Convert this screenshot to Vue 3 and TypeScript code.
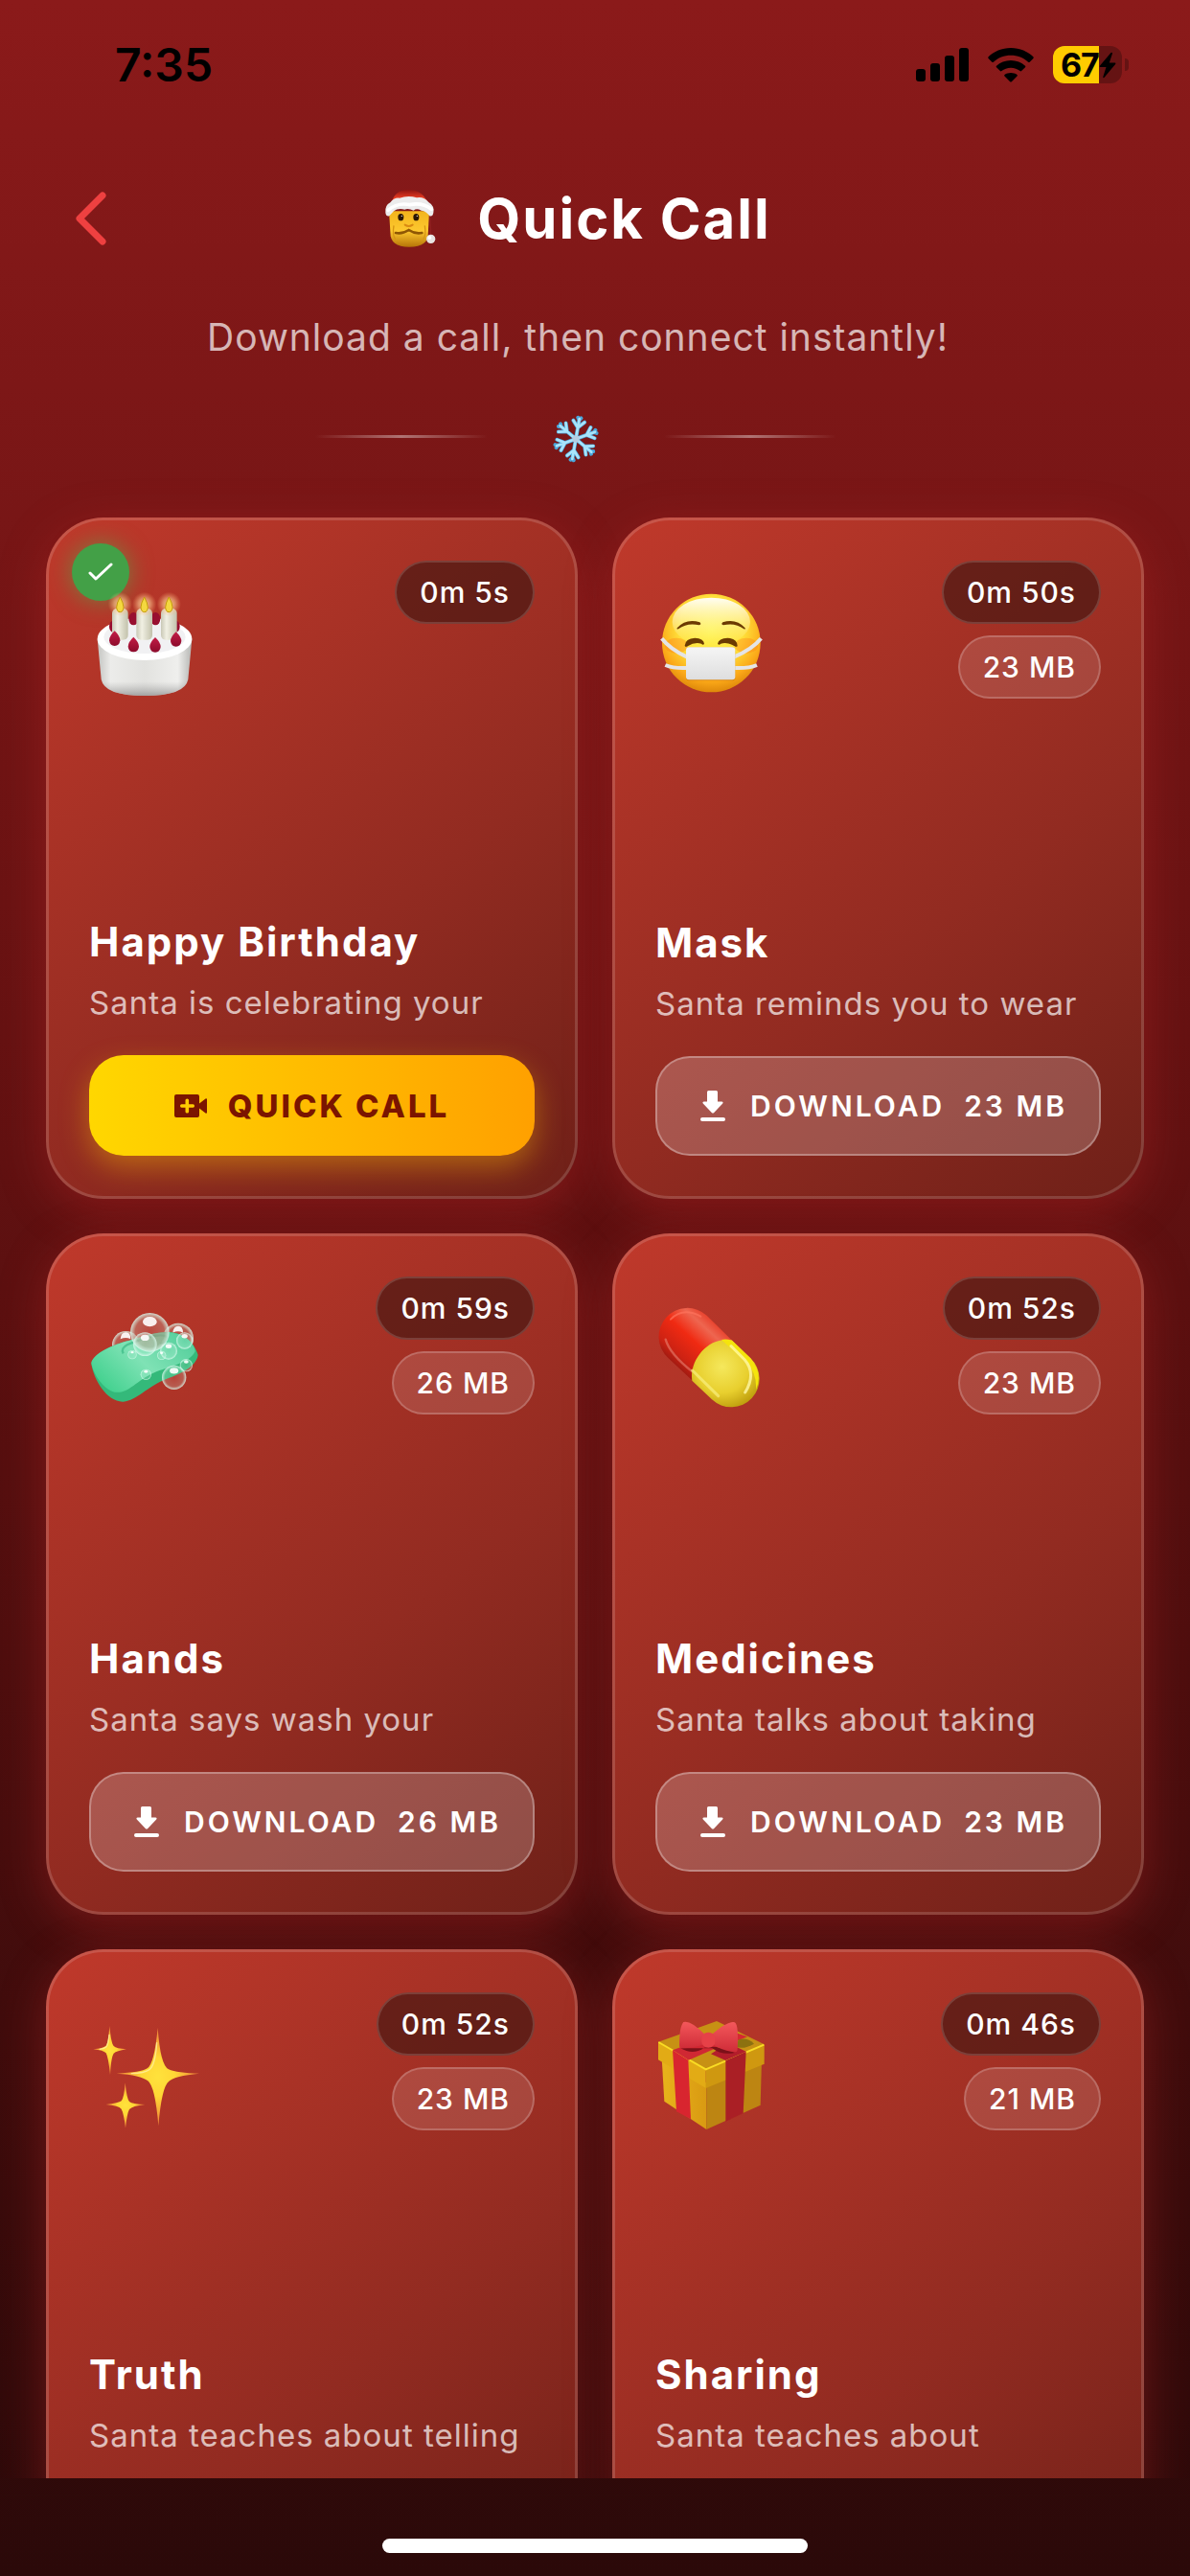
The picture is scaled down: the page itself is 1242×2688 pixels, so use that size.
<script setup lang="ts">
type Art = 'cake' | 'mask' | 'soap' | 'pill' | 'sparkles' | 'gift'

interface Call {
  art: Art
  title: string
  text: string
  duration: string
  size?: string
  ready?: boolean
}

const calls: Call[] = [
  { art: 'cake', title: 'Happy Birthday', text: 'Santa is celebrating your', duration: '0m 5s', ready: true },
  { art: 'mask', title: 'Mask', text: 'Santa reminds you to wear', duration: '0m 50s', size: '23 MB' },
  { art: 'soap', title: 'Hands', text: 'Santa says wash your', duration: '0m 59s', size: '26 MB' },
  { art: 'pill', title: 'Medicines', text: 'Santa talks about taking', duration: '0m 52s', size: '23 MB' },
  { art: 'sparkles', title: 'Truth', text: 'Santa teaches about telling', duration: '0m 52s', size: '23 MB' },
  { art: 'gift', title: 'Sharing', text: 'Santa teaches about', duration: '0m 46s', size: '21 MB' },
]

const flakeArms = [0, 60, 120, 180, 240, 300]
</script>

<template>
  <div class="screen">
    <div class="status">
      <span class="time">7:35</span>
      <div class="indicators">
        <svg class="signal" viewBox="0 0 55 35" aria-hidden="true">
          <rect x="0" y="22" width="10" height="13" rx="3" />
          <rect x="15" y="16" width="10" height="19" rx="3" />
          <rect x="30" y="8" width="10" height="27" rx="3" />
          <rect x="45" y="0" width="10" height="35" rx="3" />
        </svg>
        <svg class="wifi" viewBox="0 0 48 36" aria-hidden="true">
          <path d="M24 0C14.600 0 6.200 3.700 0.600 9.300Q-0.100 10.100 0.600 10.900L4.300 14.700Q5.100 15.400 5.900 14.700C10.600 10.300 17 7.700 24 7.700S37.400 10.300 42.100 14.700Q42.900 15.400 43.700 14.700L47.400 10.900Q48.100 10.100 47.400 9.300C41.800 3.700 33.400 0 24 0Z" />
          <path d="M24 13C18.200 13 12.900 15.200 9 18.700Q8.200 19.500 9 20.300L12.900 24.100Q13.600 24.800 14.400 24.100C17 22 20.300 20.700 24 20.700S31 22 33.600 24.100Q34.400 24.800 35.100 24.100L39 20.300Q39.800 19.500 39 18.700C35.100 15.200 29.800 13 24 13Z" />
          <path d="M24 26C21.500 26 19.300 26.700 17.500 27.900Q16.600 28.600 17.500 29.500L23.200 35.200Q24 36 24.800 35.200L30.500 29.500Q31.400 28.600 30.500 27.900C28.700 26.700 26.500 26 24 26Z" />
        </svg>
        <div class="battery">
          <span class="level">67</span>
          <svg class="bolt" viewBox="0 0 18 28" aria-hidden="true">
            <path d="M12.500 1L0.800 14.800Q0.300 16 1.500 16H7.500L4.200 26.500Q4.500 27.800 5.600 26.800L17.300 12.800Q17.800 11.400 16.500 11.400H10.800L14 1.800Q13.700 0.300 12.500 1Z" />
          </svg>
        </div>
        <span class="battery-cap"></span>
      </div>
    </div>

    <header class="header">
      <button class="back" type="button" aria-label="Back">
        <svg viewBox="0 0 32 56" aria-hidden="true"><path d="M28 4L4 28L28 52" /></svg>
      </button>
      <h1>
        <svg class="santa" viewBox="130 90 165 186" aria-hidden="true">
          <defs>
            <linearGradient id="santa-skin" x1="0" y1="0" x2="0" y2="1">
              <stop offset="0" stop-color="#f2b41c" /><stop offset=".55" stop-color="#fdc82f" /><stop offset="1" stop-color="#b67408" />
            </linearGradient>
            <linearGradient id="santa-hat" x1="0" y1="0" x2="0" y2="1">
              <stop offset="0" stop-color="#8e1410" /><stop offset=".5" stop-color="#e23a22" /><stop offset="1" stop-color="#f4573a" />
            </linearGradient>
          </defs>
          <path d="M258 120Q278 160 275 236" fill="none" stroke="#8f2020" stroke-width="4" />
          <path d="M145 160H271L267 238Q263 272 208 272Q155 272 150 238Z" fill="url(#santa-skin)" />
          <path d="M152 142C156 108 175 93 205 93C238 93 260 108 267 142Z" fill="url(#santa-hat)" />
          <path d="M134 165Q131 142 149 133Q160 117 178 119Q205 109 232 118Q254 114 269 132Q288 143 284 165Q282 178 272 175Q262 160 246 158Q231 150 222 158Q205 150 194 155Q173 150 160 160L146 175Q136 178 134 165Z" fill="#ececec" />
          <path d="M142 157Q172 132 210 140Q250 132 278 154" fill="none" stroke="#fff" stroke-width="11" stroke-linecap="round" />
          <ellipse cx="182" cy="179" rx="9" ry="11" fill="#2b1703" /><ellipse cx="230" cy="179" rx="9" ry="11" fill="#2b1703" />
          <circle cx="185" cy="175" r="2" fill="#fff" /><circle cx="233" cy="175" r="2" fill="#fff" />
          <path d="M195 203Q207 211 219 203" fill="none" stroke="#d98912" stroke-width="6" stroke-linecap="round" />
          <path d="M166 228Q185 233 207 219Q228 233 248 228" fill="none" stroke="#8f5704" stroke-width="8" stroke-linecap="round" />
          <path d="M160 205Q155 235 165 248M257 205Q262 235 252 248" fill="none" stroke="#d79512" stroke-width="4" />
          <circle cx="276" cy="247" r="14" fill="#e8e4e2" /><circle cx="272" cy="243" r="6" fill="#fff" />
        </svg>
        <span>Quick Call</span>
      </h1>
    </header>
    <p class="lead">Download a call, then connect instantly!</p>
    <div class="divider">
      <span class="rule"></span>
      <svg class="flake" viewBox="-72 -72 144 144" aria-hidden="true">
        <g v-for="a in flakeArms" :key="a" :transform="`rotate(${a + 10})`" fill="none" stroke-linecap="round">
          <path d="M0 0V-64M0 -36L-18 -56M0 -36L18 -56M0 -60L-5 -67M0 -60L5 -67" stroke="#4aa6da" stroke-width="12" />
          <path d="M0 0V-64M0 -36L-18 -56M0 -36L18 -56" stroke="#a9e4fa" stroke-width="8" />
        </g>
        <circle r="11" fill="#b5cde2" />
      </svg>
      <span class="rule"></span>
    </div>

    <main class="list">
      <article v-for="call in calls" :key="call.title" class="card">
        <span v-if="call.ready" class="done" role="img" aria-label="Downloaded">
          <svg viewBox="0 0 26 20" aria-hidden="true"><path d="M2 11L8 17L24 2" /></svg>
        </span>
        <div class="top">
          <svg v-if="call.art === 'cake'" class="art" viewBox="0 0 360 360" aria-hidden="true">
            <defs>
              <linearGradient id="cake-side" x1="0" x2="1">
                <stop offset="0" stop-color="#c3c3c0" /><stop offset=".14" stop-color="#ececea" /><stop offset=".5" stop-color="#e2e2df" /><stop offset=".85" stop-color="#efefed" /><stop offset="1" stop-color="#b5b5b2" />
              </linearGradient>
              <linearGradient id="cake-shade" x1="0" y1="0" x2="0" y2="1">
                <stop offset=".75" stop-color="#999" stop-opacity="0" /><stop offset="1" stop-color="#777" stop-opacity=".6" />
              </linearGradient>
              <linearGradient id="candle" x1="0" x2="1">
                <stop offset="0" stop-color="#c9c8b6" /><stop offset=".35" stop-color="#f1f0e3" /><stop offset="1" stop-color="#c2c1ab" />
              </linearGradient>
              <radialGradient id="glow"><stop offset="0" stop-color="#ffe28a" stop-opacity=".9" /><stop offset=".5" stop-color="#ffcf95" stop-opacity=".55" /><stop offset="1" stop-color="#ffab70" stop-opacity="0" /></radialGradient>
              <linearGradient id="berry" x1="0" y1="0" x2="0" y2="1"><stop offset="0" stop-color="#c31d46" /><stop offset="1" stop-color="#8c0a2b" /></linearGradient>
            </defs>
            <path d="M26 173L38 300Q48 351 174 351T310 300L322 173Z" fill="url(#cake-side)" />
            <path d="M26 173L38 300Q48 351 174 351T310 300L322 173Z" fill="url(#cake-shade)" />
            <ellipse cx="174" cy="173" rx="148" ry="67" fill="#fff" />
            <ellipse cx="174" cy="167" rx="128" ry="52" fill="#f1f1f3" />
            <g fill="#980f30"><ellipse cx="75" cy="134" rx="12" ry="18" /><ellipse cx="139" cy="110" rx="15" ry="20" /><ellipse cx="208" cy="110" rx="15" ry="20" /><ellipse cx="272" cy="134" rx="12" ry="18" /></g>
            <g v-for="x in [97, 173, 250]" :key="x">
              <rect :x="x - 25" y="78" width="50" height="98" rx="15" fill="url(#candle)" />
              <circle :cx="x" cy="64" r="38" fill="url(#glow)" />
              <path :d="`M${x} 42Q${x + 11} 62 ${x + 11} 74Q${x + 10} 89 ${x} 89T${x - 11} 74Q${x - 11} 62 ${x} 42Z`" fill="#f4d83f" stroke="#c49a0b" stroke-width="3" />
            </g>
            <g fill="url(#berry)">
              <path d="M80 148Q97 164 97 178Q95 195 80 195T63 178Q63 164 80 148Z" />
              <path d="M139 167Q156 183 156 197Q154 214 139 214T122 197Q122 183 139 167Z" />
              <path d="M207 168Q224 184 224 198Q222 215 207 215T190 198Q190 184 207 168Z" />
              <path d="M272 151Q289 167 289 180Q287 197 272 197T255 180Q255 167 272 151Z" />
            </g>
          </svg>

          <svg v-else-if="call.art === 'mask'" class="art" viewBox="0 0 360 360" aria-hidden="true">
            <defs>
              <radialGradient id="face" cx=".5" cy=".36" r=".66"><stop offset="0" stop-color="#fff44c" /><stop offset=".5" stop-color="#ffe03a" /><stop offset=".8" stop-color="#fba818" /><stop offset="1" stop-color="#d98308" /></radialGradient>
              <linearGradient id="shine" x1="0" y1="0" x2="0" y2="1"><stop offset="0" stop-color="#fff" stop-opacity=".95" /><stop offset="1" stop-color="#fff59a" stop-opacity="0" /></linearGradient>
              <linearGradient id="cloth" x1="0" y1="0" x2="0" y2="1"><stop offset="0" stop-color="#f5f5f5" /><stop offset="1" stop-color="#dedede" /></linearGradient>
            </defs>
            <circle cx="175" cy="186" r="154" fill="url(#face)" />
            <ellipse cx="175" cy="120" rx="122" ry="76" fill="url(#shine)" />
            <g fill="#ff7a16" opacity=".35"><ellipse cx="66" cy="194" rx="36" ry="24" /><ellipse cx="285" cy="194" rx="36" ry="24" /></g>
            <g fill="#6b3a02">
              <path d="M68 139Q96 108 139 121Q146 128 137 130Q101 121 72 142Q66 144 68 139Z" />
              <path d="M281 139Q253 108 211 121Q204 128 213 130Q249 121 277 142Q283 144 281 139Z" />
              <path d="M92 194Q94 171 124 170Q151 171 153 188Q150 194 144 188Q124 181 101 196Q94 200 92 194Z" />
              <path d="M257 194Q255 171 226 170Q198 171 195 188Q199 194 205 188Q225 181 248 196Q256 200 257 194Z" />
            </g>
            <g fill="none" stroke="#e4e4e6" stroke-width="12"><path d="M20 172Q48 207 98 229M331 172Q302 207 247 229M31 255Q58 266 98 264M318 255Q292 266 247 264" /></g>
            <rect x="96" y="199" width="154" height="105" rx="9" fill="#c56c08" opacity=".5" />
            <rect x="96" y="199" width="154" height="102" rx="9" fill="url(#cloth)" />
          </svg>

          <svg v-else-if="call.art === 'soap'" class="art" viewBox="39 78 360 360" aria-hidden="true">
            <defs>
              <linearGradient id="soap-top" x1="0" y1=".8" x2="1" y2=".2"><stop offset="0" stop-color="#3ed08c" /><stop offset=".5" stop-color="#7fe2b5" /><stop offset="1" stop-color="#55cf9c" /></linearGradient>
              <radialGradient id="bubble"><stop offset="0" stop-color="#fff" stop-opacity=".08" /><stop offset=".75" stop-color="#d8fff0" stop-opacity=".2" /><stop offset="1" stop-color="#d9f7ec" stop-opacity=".85" /></radialGradient>
            </defs>
            <g v-for="b in [[154, 220, 43], [318, 200, 48]]" :key="b[0]"><circle :cx="b[0]" :cy="b[1]" :r="b[2]" fill="url(#bubble)" /><path :d="`M${b[0] - 17} ${b[1] - 18}Q${b[0] - 15} ${b[1] - 39} ${b[0]} ${b[1] - 39}T${b[0] + 15} ${b[1] - 18}Q${b[0]} ${b[1] - 26} ${b[0] - 17} ${b[1] - 18}Z`" fill="#fff" opacity=".9" /></g>
            <path d="M46 280C49 250 108 221 160 208C220 190 274 170 318 185C355 198 374 229 380 252C374 287 331 308 286 325C216 352 190 395 146 398C96 400 53 329 46 280Z" fill="#34b97a" />
            <path d="M46 276C52 247 112 219 166 206C220 188 276 171 320 187C354 199 370 224 371 240C354 277 292 286 240 308C184 334 161 374 119 368C83 359 51 310 46 276Z" fill="url(#soap-top)" />
            <path d="M146 247C130 220 190 208 222 197Q268 184 282 195Q290 206 262 217" fill="none" stroke="#4cc592" stroke-width="7" />
            <circle cx="229" cy="181" r="58" fill="#b5463a" opacity=".35" />
            <g v-for="b in [[229, 181, 61], [214, 218, 37], [288, 239, 27], [338, 207, 26], [305, 322, 38], [343, 284, 20], [217, 313, 17], [174, 251, 14], [266, 253, 14]]" :key="`${b[0]}-${b[1]}`">
              <circle :cx="b[0]" :cy="b[1]" :r="b[2]" fill="url(#bubble)" />
              <ellipse :cx="b[0]" :cy="b[1] - b[2] * 0.55" :rx="b[2] * 0.36" :ry="b[2] * 0.25" fill="#fff" opacity=".9" />
            </g>
          </svg>

          <svg v-else-if="call.art === 'pill'" class="art" viewBox="42 78 360 360" aria-hidden="true">
            <defs>
              <linearGradient id="pill-red" x1=".8" y1=".1" x2=".15" y2=".8"><stop offset="0" stop-color="#e52a16" /><stop offset=".25" stop-color="#ee6650" /><stop offset=".5" stop-color="#f02a12" /><stop offset=".8" stop-color="#cc2213" /><stop offset="1" stop-color="#8f1710" /></linearGradient>
              <radialGradient id="pill-yellow" cx=".45" cy=".4" r=".65"><stop offset="0" stop-color="#f5e85c" /><stop offset=".6" stop-color="#e8cf2e" /><stop offset="1" stop-color="#bd9c0c" /></radialGradient>
            </defs>
            <path d="M157 331L82 261A86 86 0 0 1 203 128L282 206Q185 220 157 331Z" fill="url(#pill-red)" />
            <path d="M74 203Q87 249 159 305" fill="none" stroke="#e88070" stroke-width="7" stroke-linecap="round" opacity=".6" />
            <path d="M90 140Q128 101 184 131" fill="none" stroke="#ff745c" stroke-width="6" stroke-linecap="round" opacity=".7" />
            <path d="M282 206L340 262A88 88 0 0 1 219 391L157 332C147 267 211 190 282 206Z" fill="url(#pill-yellow)" />
            <path d="M249 204Q263 200 282 206L340 262Q380 310 357 361Q360 307 328 276Z" fill="#f5e40c" />
            <path d="M279 224L322 267Q359 310 323 369" fill="none" stroke="#fff8a5" stroke-width="9" stroke-linecap="round" opacity=".8" />
            <path d="M158 300L239 380" stroke="#fbf285" stroke-width="9" stroke-linecap="round" opacity=".65" />
          </svg>

          <svg v-else-if="call.art === 'sparkles'" class="art" viewBox="39 69 360 360" aria-hidden="true">
            <defs>
              <radialGradient id="spark"><stop offset="0" stop-color="#ffe23c" /><stop offset=".4" stop-color="#ffd735" /><stop offset="1" stop-color="#f0803a" /></radialGradient>
            </defs>
            <g fill="url(#spark)">
              <path d="M254 108Q262 226 288 238Q315 250 384 251Q306 258 289 275Q266 292 256 415Q246 292 223 274Q201 256 125 251Q202 248 221 235Q243 222 254 108Z" />
              <path d="M103 102Q108 157 116 165Q124 173 156 175Q125 180 116 188Q108 199 105 255Q99 199 92 187Q84 178 52 175Q83 172 91 165Q99 158 103 102Z" />
              <path d="M152 280Q157 331 165 339Q174 347 214 348Q174 353 165 363Q158 375 153 422Q147 374 140 362Q132 352 91 348Q132 344 140 337Q148 330 152 280Z" />
            </g>
            <path d="M251 155Q246 224 229 238Q212 250 172 251M102 130Q99 160 93 167Q87 173 73 175" fill="none" stroke="#fff0a0" stroke-width="4" stroke-linecap="round" opacity=".8" />
          </svg>

          <svg v-else class="art" viewBox="42 69 360 360" aria-hidden="true">
            <defs>
              <linearGradient id="bow" x1="0" y1="0" x2="0" y2="1"><stop offset="0" stop-color="#f4585b" /><stop offset="1" stop-color="#cf2c38" /></linearGradient>
              <linearGradient id="gold" x1="0" x2="1"><stop offset="0" stop-color="#e8b31b" /><stop offset="1" stop-color="#d99a12" /></linearGradient>
            </defs>
            <path d="M62 200L70 338L202 426L202 280Z" fill="url(#gold)" />
            <path d="M202 280V426L371 350L375 205Z" fill="#bd8512" />
            <path d="M51 152L234 87L383 160L200 240Z" fill="#c79114" />
            <path d="M51 152L200 240V297L51 208Z" fill="#e2ab15" />
            <path d="M200 240L383 160V221L200 297Z" fill="#cf9810" />
            <path d="M52 153L200 238L382 161" fill="none" stroke="#f9dc24" stroke-width="6" />
            <path d="M96 178L198 140L245 166L146 209Z" fill="#d02833" />
            <path d="M216 190L262 210L326 182L270 155Z" fill="#b31d2b" />
            <path d="M286 121L330 136L297 149Z" fill="#d52832" />
            <path d="M96 178L145 209L153 394L108 370Z" fill="#d8252f" />
            <path d="M262 211L326 182L317 376L262 401Z" fill="#aa1f25" />
            <path d="M296 168Q320 176 351 158Q330 137 302 145Z" fill="#8c7110" />
            <path d="M121 172Q160 195 195 170Q235 160 290 186Q250 195 220 172Z" fill="#7c1119" />
            <path d="M130 90Q151 83 194 126V160Q160 172 126 172Q117 173 117 162Q117 105 130 90Z" fill="url(#bow)" />
            <path d="M284 90Q262 92 222 126V160Q250 180 292 184Q299 184 299 174Q303 105 293 93Q290 89 284 90Z" fill="url(#bow)" />
            <rect x="187" y="122" width="42" height="48" rx="20" fill="#e64148" />
          </svg>

          <div class="pills">
            <span class="pill dark">{{ call.duration }}</span>
            <span v-if="call.size" class="pill">{{ call.size }}</span>
          </div>
        </div>

        <h2>{{ call.title }}</h2>
        <p class="text">{{ call.text }}</p>
        <button v-if="call.ready" class="action call" type="button">
          <svg class="video" viewBox="0 0 34 24" aria-hidden="true">
            <path fill-rule="evenodd" d="M2 0H24Q26 0 26 2V9.500L32.500 4.500Q34 3.800 34 5.500V18.500Q34 20.200 32.500 19.500L26 14.500V22Q26 24 24 24H2Q0 24 0 22V2Q0 0 2 0ZM11.500 6V10.300H7.500Q6 10.300 6 12T7.500 13.700H11.500V18Q11.500 19.500 13.300 19.500T15.100 18V13.700H19.500Q21 13.700 21 12T19.500 10.300H15.100V6Q15.100 4.500 13.300 4.500T11.500 6Z" />
          </svg>
          <span>QUICK CALL</span>
        </button>
        <button v-else class="action" type="button">
          <svg class="arrow" viewBox="0 0 26 32" aria-hidden="true">
            <path d="M8.500 0H16.500Q18 0 18 1.500V11.500H22.200Q24.500 11.900 23 13.800L14.200 23Q13 24 11.800 23L3 13.800Q1.500 11.900 3.800 11.500H7V1.500Q7 0 8.500 0Z" />
            <rect x="0" y="28" width="26" height="4" rx="2" />
          </svg>
          <span>DOWNLOAD</span>
          <span class="amount">{{ call.size }}</span>
        </button>
      </article>
    </main>

    <footer class="home"><span class="bar"></span></footer>
  </div>
</template>

<style>
body {
  margin: 0;
}
</style>

<style scoped>
.screen {
  display: flex;
  flex-direction: column;
  height: 100vh;
  box-sizing: border-box;
  overflow: hidden;
  color: #fff;
  font-family: Inter, "Liberation Sans", sans-serif;
  background: linear-gradient(#8b1a1a 0%, #5c1010 50%, #2b0909 100%);
}

.status {
  display: flex;
  align-items: center;
  justify-content: space-between;
  height: 135px;
  padding: 0 64px 0 120px;
  color: #000;
}

.time {
  font-size: 48px;
  font-weight: 600;
  line-height: 60px;
}

.indicators {
  display: flex;
  align-items: center;
}

.signal {
  width: 55px;
  height: 35px;
  margin-right: 20px;
}

.wifi {
  width: 48px;
  height: 36px;
  margin-right: 20px;
}

.battery {
  display: flex;
  align-items: center;
  box-sizing: border-box;
  width: 72px;
  height: 39px;
  padding-left: 8px;
  border-radius: 12px;
  background: linear-gradient(90deg, #fc0 0 67%, #651313 67%);
}

.level {
  width: 40px;
  font-size: 34px;
  font-weight: 700;
  line-height: 39px;
  letter-spacing: -1px;
}

.bolt {
  width: 18px;
  height: 28px;
}

.battery-cap {
  width: 4px;
  height: 13px;
  margin-left: 3px;
  border-radius: 0 6px 6px 0;
  background: #651313;
}

.header {
  display: grid;
  grid-template-columns: 126px 1fr 126px;
  align-items: center;
  margin: 54px 36px 0 0;
}

.back {
  display: flex;
  margin-left: 79px;
  padding: 0;
  border: 0;
  background: none;
}

.back svg {
  width: 32px;
  height: 56px;
  fill: none;
  stroke: #ee4040;
  stroke-width: 7;
  stroke-linecap: round;
  stroke-linejoin: round;
}

h1 {
  display: flex;
  align-items: center;
  justify-content: center;
  gap: 42px;
  margin: 0;
  font-size: 58px;
  font-weight: 700;
  line-height: 78px;
  letter-spacing: 2px;
}

.santa {
  width: 55px;
  height: 62px;
}

.lead {
  margin: 61px 36px 0 0;
  color: rgba(255, 255, 255, 0.7);
  font-size: 39px;
  line-height: 48px;
  letter-spacing: 1px;
  text-align: center;
}

.divider {
  display: flex;
  align-items: center;
  justify-content: center;
  gap: 68px;
  margin: 56px 40px 0 0;
}

.rule {
  width: 180px;
  height: 3px;
  margin-bottom: 6px;
  background: linear-gradient(90deg, transparent, rgba(255, 255, 255, 0.4), transparent);
}

.flake {
  width: 48px;
  height: 52px;
}

.list {
  display: grid;
  flex: 1;
  grid-template-columns: 1fr 1fr;
  align-content: start;
  gap: 36px;
  min-height: 0;
  padding: 56px 48px 0;
  overflow-y: auto;
  scrollbar-width: none;
}

.card {
  position: relative;
  display: flex;
  flex-direction: column;
  box-sizing: border-box;
  min-height: 711px;
  padding: 42px;
  border: 3px solid rgba(255, 255, 255, 0.15);
  border-radius: 60px;
  background: linear-gradient(142deg, #c0392b 0%, #922b21 60%, #6e2018 100%) border-box;
  box-shadow: 0 12px 48px rgba(192, 40, 40, 0.4);
}

.done {
  position: absolute;
  top: 24px;
  left: 24px;
  display: flex;
  align-items: center;
  justify-content: center;
  width: 60px;
  height: 60px;
  border-radius: 50%;
  background: #43a047;
  box-shadow: 0 0 24px rgba(76, 175, 80, 0.6);
}

.done svg {
  width: 26px;
  height: 20px;
  fill: none;
  stroke: #fff;
  stroke-width: 3;
  stroke-linecap: round;
  stroke-linejoin: round;
}

.top {
  position: relative;
  display: flex;
  align-items: flex-start;
  justify-content: space-between;
  margin-bottom: auto;
}

.art {
  width: 120px;
  height: 120px;
  margin-top: 24px;
}

.pills {
  display: flex;
  flex-direction: column;
  align-items: flex-end;
  gap: 12px;
}

.pill {
  padding: 0 24px;
  border: 2px solid rgba(255, 255, 255, 0.2);
  border-radius: 33px;
  background: rgba(255, 255, 255, 0.12);
  font-size: 30px;
  font-weight: 500;
  line-height: 62px;
  letter-spacing: 1px;
}

.pill.dark {
  border-color: rgba(255, 255, 255, 0.15);
  background: rgba(48, 16, 12, 0.55);
}

h2 {
  margin: 0;
  font-size: 42px;
  font-weight: 700;
  line-height: 48px;
  letter-spacing: 2px;
}

.text {
  margin: 15px 0 31px;
  color: rgba(255, 255, 255, 0.7);
  font-size: 33px;
  line-height: 48px;
  letter-spacing: 1px;
  white-space: nowrap;
}

.action {
  display: flex;
  align-items: center;
  justify-content: center;
  box-sizing: border-box;
  height: 104px;
  padding: 0 0 0 12px;
  border: 2px solid rgba(255, 255, 255, 0.3);
  border-radius: 36px;
  background: rgba(255, 255, 255, 0.2);
  color: #fff;
  font-family: inherit;
  font-size: 30px;
  font-weight: 600;
  letter-spacing: 3px;
}

.action svg {
  fill: currentColor;
}

.action.call {
  height: 105px;
  padding: 0;
  border: 0;
  background: linear-gradient(90deg, #ffd700, #ffa000);
  box-shadow: 0 12px 30px rgba(255, 193, 7, 0.4);
  color: #7b1500;
  font-size: 33px;
  font-weight: 800;
}

.video {
  width: 34px;
  height: 24px;
  margin-right: 22px;
}

.arrow {
  width: 26px;
  height: 32px;
  margin-right: 26px;
}

.amount {
  margin-left: 20px;
}

.home {
  display: flex;
  flex: none;
  justify-content: center;
  align-items: flex-end;
  height: 102px;
}

.bar {
  width: 444px;
  height: 15px;
  margin-bottom: 24px;
  border-radius: 8px;
  background: #fff;
}
</style>
